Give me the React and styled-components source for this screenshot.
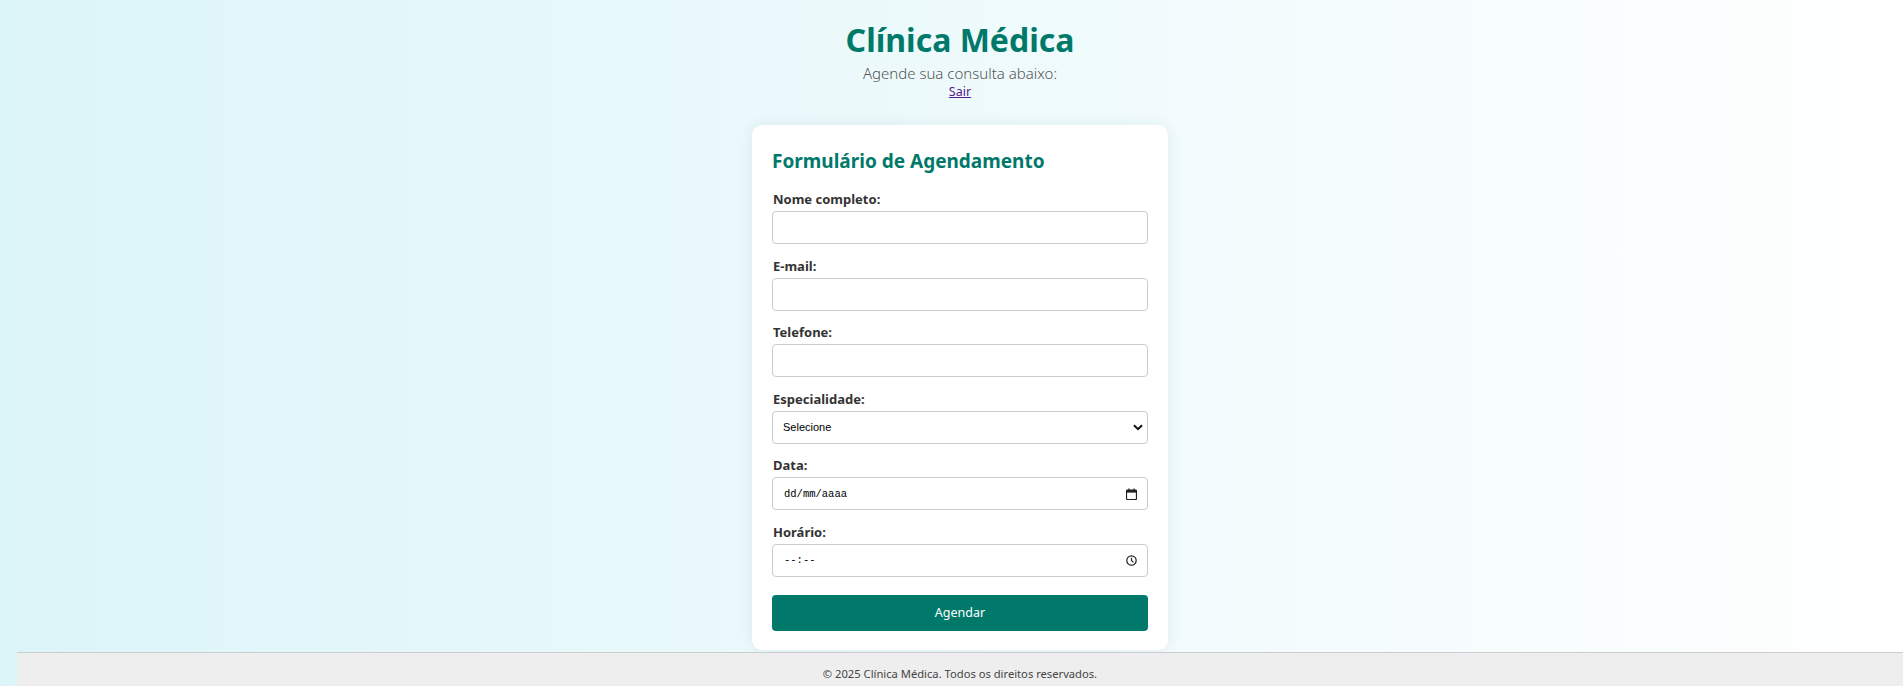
import styled, { createGlobalStyle } from "styled-components";

const GlobalStyle = createGlobalStyle`
  html, body {
    margin: 0;
    padding: 0;
  }
  body {
    background: linear-gradient(to right, #dcf5f9, #ffffff);
    font-family: "Noto Sans", "Open Sans", sans-serif;
    color: #333;
  }
  * { box-sizing: border-box; }
`;

const fields = [
  { id: "nome", label: "Nome completo:", type: "text" },
  { id: "email", label: "E-mail:", type: "email" },
  { id: "telefone", label: "Telefone:", type: "tel" },
];

export default function App() {
  return (
    <>
      <GlobalStyle />
      <Page>
        <Header>
          <Title>Clínica Médica</Title>
          <Subtitle>Agende sua consulta abaixo:</Subtitle>
          <Logout href="#">Sair</Logout>
        </Header>

        <Card>
          <FormTitle>Formulário de Agendamento</FormTitle>
          <Form onSubmit={(e) => e.preventDefault()}>
            {fields.map((f) => (
              <Field key={f.id}>
                <Label htmlFor={f.id}>{f.label}</Label>
                <Input id={f.id} type={f.type} />
              </Field>
            ))}

            <Field>
              <Label htmlFor="especialidade">Especialidade:</Label>
              <SelectWrap>
                <Select id="especialidade" defaultValue="">
                  <option value="">Selecione</option>
                  <option value="clinico">Clínico Geral</option>
                  <option value="cardio">Cardiologia</option>
                  <option value="derma">Dermatologia</option>
                  <option value="pediatria">Pediatria</option>
                </Select>
                <Chevron width="10" height="7" viewBox="0 0 10 7">
                  <path d="M1 1.2L5 5.2L9 1.2" fill="none" stroke="#111" strokeWidth="2" />
                </Chevron>
              </SelectWrap>
            </Field>

            <Field>
              <Label htmlFor="data">Data:</Label>
              <PickerBox>
                <PickerInput id="data" placeholder="dd/mm/aaaa" />
                <svg width="11" height="12" viewBox="0 0 11 12">
                  <rect x="0.5" y="2" width="10" height="9.5" rx="1" fill="none" stroke="#222" strokeWidth="1.2" />
                  <rect x="0.5" y="2" width="10" height="2.6" fill="#222" />
                  <rect x="2.3" y="0.5" width="1.3" height="2.5" fill="#222" />
                  <rect x="7.4" y="0.5" width="1.3" height="2.5" fill="#222" />
                </svg>
              </PickerBox>
            </Field>

            <Field>
              <Label htmlFor="horario">Horário:</Label>
              <PickerBox>
                <PickerInput id="horario" placeholder="--:--" />
                <svg width="11" height="11" viewBox="0 0 11 11">
                  <circle cx="5.5" cy="5.5" r="4.7" fill="none" stroke="#222" strokeWidth="1.2" />
                  <path d="M5.5 2.8V5.6L7.4 7.4" fill="none" stroke="#222" strokeWidth="1.2" />
                </svg>
              </PickerBox>
            </Field>

            <Button type="submit">Agendar</Button>
          </Form>
        </Card>

        <Footer>© 2025 Clínica Médica. Todos os direitos reservados.</Footer>
      </Page>
    </>
  );
}

/* ---------- styles ---------- */

const Page = styled.div`
  min-height: 100vh;
  padding-left: 17px;
  display: flex;
  flex-direction: column;
  align-items: center;
`;

const Header = styled.header`
  padding-top: 18px;
  text-align: center;
  display: flex;
  flex-direction: column;
  align-items: center;
`;

const Title = styled.h1`
  margin: 0;
  font-size: 32px;
  line-height: 43px;
  font-weight: 700;
  color: #00796b;
`;

const Subtitle = styled.p`
  margin: 2px 0 0;
  font-size: 15px;
  line-height: 20px;
  font-weight: 300;
  color: #555;
`;

const Logout = styled.a`
  font-size: 12.5px;
  line-height: 18px;
  color: #551a8b;
  text-decoration: underline;
`;

const Card = styled.main`
  width: 416px;
  margin: 24px 0 2px;
  padding: 20px 20px 19.5px;
  background: #fff;
  border-radius: 10px;
  box-shadow: 0 0 14px rgba(0, 60, 80, 0.08);
`;

const FormTitle = styled.h2`
  margin: 1px 0 13px;
  font-size: 19px;
  line-height: 30px;
  font-weight: 700;
  color: #00796b;
`;

const Form = styled.form`
  display: flex;
  flex-direction: column;
  gap: 11.5px;
`;

const Field = styled.div`
  display: flex;
  flex-direction: column;
  gap: 2px;
`;

const Label = styled.label`
  padding: 1px 0 0 1px;
  font-size: 13px;
  line-height: 19px;
  font-weight: 700;
  color: #333;
`;

const Input = styled.input`
  width: 100%;
  height: 33px;
  padding: 0 10px;
  border: 1px solid #ccc;
  border-radius: 4px;
  background: #fff;
  font-family: "Liberation Sans", Arial, sans-serif;
  font-size: 13px;
  outline: none;
`;

const SelectWrap = styled.div`
  position: relative;
`;

const Select = styled.select`
  width: 100%;
  height: 33px;
  padding: 0 10px;
  border: 1px solid #ccc;
  border-radius: 4px;
  background: #fff;
  appearance: none;
  font-family: "Liberation Sans", Arial, sans-serif;
  font-size: 11px;
  color: #000;
  outline: none;
`;

const Chevron = styled.svg`
  position: absolute;
  right: 5px;
  top: 13px;
  pointer-events: none;
`;

const PickerBox = styled.div`
  height: 33px;
  display: flex;
  align-items: center;
  padding: 0 10px 0 11px;
  border: 1px solid #ccc;
  border-radius: 4px;
  background: #fff;
`;

const PickerInput = styled.input`
  flex: 1;
  min-width: 0;
  border: 0;
  padding: 0;
  outline: none;
  background: transparent;
  font-family: "Liberation Mono", monospace;
  font-size: 10.5px;
  color: #000;

  &::placeholder {
    color: #000;
    opacity: 1;
  }
`;

const Button = styled.button`
  margin-top: 6.5px;
  height: 36px;
  border: 0;
  border-radius: 4px;
  background: #00796b;
  color: #fff;
  font-family: "Noto Sans", sans-serif;
  font-size: 12.5px;
  cursor: pointer;
`;

const Footer = styled.footer`
  align-self: stretch;
  padding: 12px 0;
  border-top: 1px solid #ccc;
  background: #eee;
  text-align: center;
  font-size: 11.2px;
  line-height: 18px;
  color: #444;
`;
